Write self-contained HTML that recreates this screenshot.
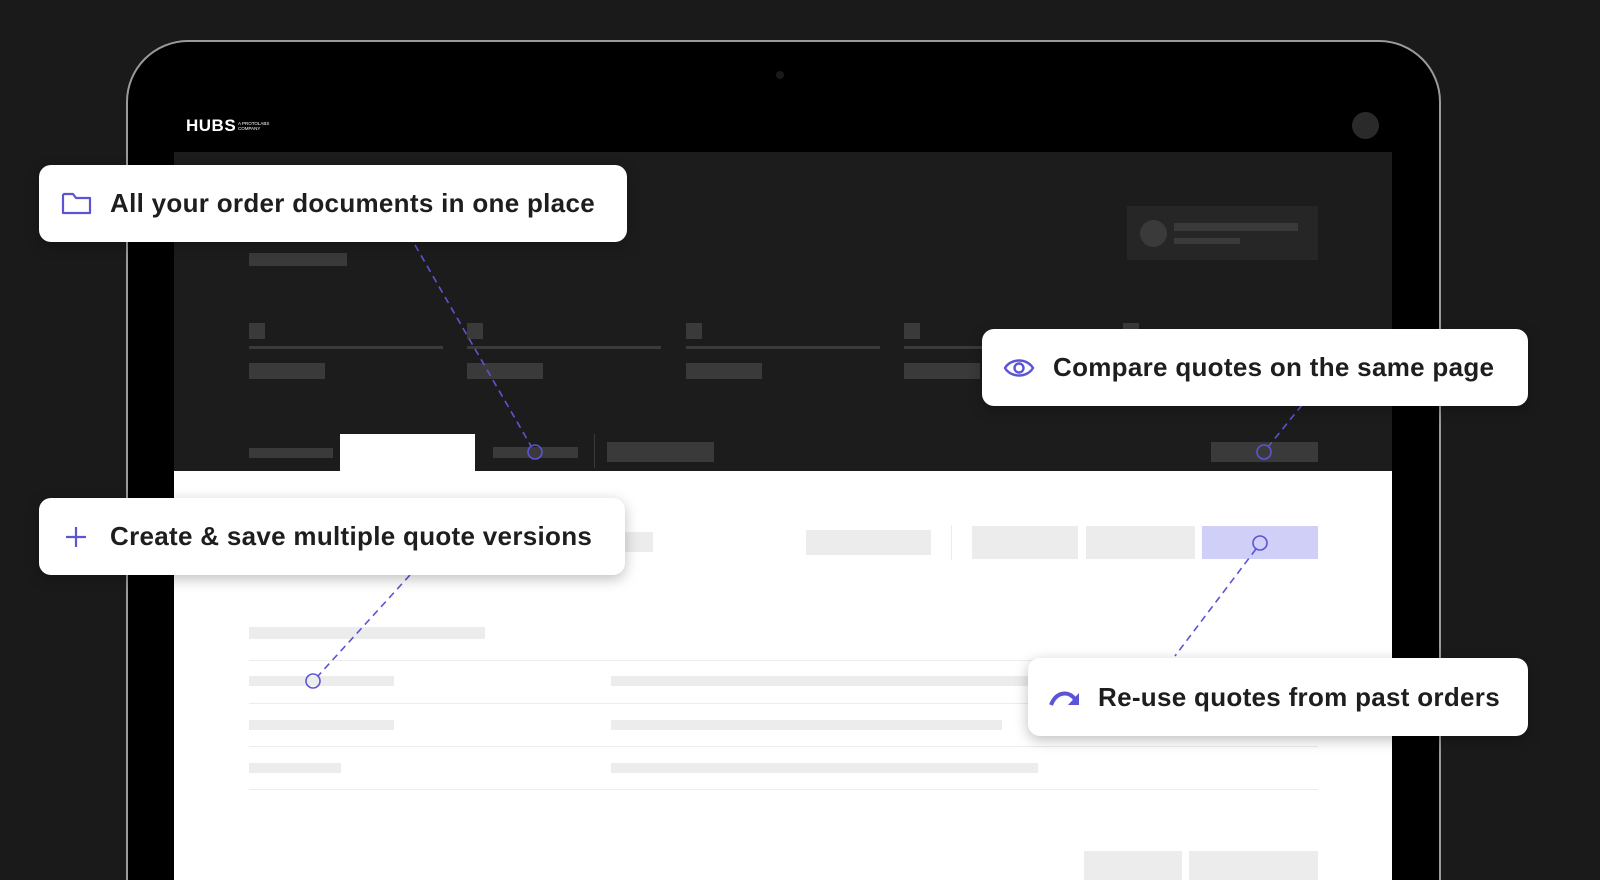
<!DOCTYPE html>
<html style="overflow:hidden;width:1600px;height:880px"><head><meta charset="utf-8"><style>
*{margin:0;padding:0;box-sizing:border-box}
body{width:1600px;height:880px;background:#1a1a1a;position:relative;overflow:hidden;font-family:"Liberation Sans",sans-serif}
.a{position:absolute}
.d{background:#3a3a3a}
.l{background:#ececec}
.card{position:absolute;background:#fff;border-radius:12px;box-shadow:0 4px 14px rgba(0,0,0,.25);display:flex;align-items:center;font-weight:bold;font-size:26px;color:#1e1e1e;letter-spacing:0.3px;white-space:nowrap}
.card svg{position:absolute}
</style></head><body>
<div class="a" style="left:126px;top:40px;width:1315px;height:860px;border:2px solid #9a9a9a;border-bottom:none;border-radius:62px 62px 0 0;background:#000"></div>
<div class="a" style="left:776px;top:71px;width:8px;height:8px;border-radius:50%;background:#1a1a1a"></div>
<div class="a" style="left:186px;top:116px;color:#fff;font-weight:bold;font-size:17px;letter-spacing:0.5px">HUBS</div>
<div class="a" style="left:238px;top:121px;color:#fff;font-size:4.5px;line-height:5px">A PROTOLABS<br>COMPANY</div>
<div class="a" style="left:1352px;top:112px;width:27px;height:27px;border-radius:50%;background:#2a2a2a"></div>
<div class="a" style="left:174px;top:152px;width:1218px;height:319px;background:#1c1c1c"></div>
<div class="a" style="left:174px;top:471px;width:1218px;height:409px;background:#fff"></div>
<div class="a" style="left:1127px;top:206px;width:191px;height:54px;background:#262626"></div>
<div class="a" style="left:1140px;top:220px;width:27px;height:27px;border-radius:50%;background:#3a3a3a"></div>
<div class="a d" style="left:1174px;top:223px;width:124px;height:8px"></div>
<div class="a d" style="left:1174px;top:238px;width:66px;height:6px"></div>
<div class="a d" style="left:249px;top:253px;width:98px;height:13px"></div>
<div class="a d" style="left:249px;top:323px;width:16px;height:16px"></div>
<div class="a d" style="left:467px;top:323px;width:16px;height:16px"></div>
<div class="a d" style="left:686px;top:323px;width:16px;height:16px"></div>
<div class="a d" style="left:904px;top:323px;width:16px;height:16px"></div>
<div class="a d" style="left:1123px;top:323px;width:16px;height:16px"></div>
<div class="a d" style="left:249px;top:346px;width:194px;height:3px"></div>
<div class="a d" style="left:467px;top:346px;width:194px;height:3px"></div>
<div class="a d" style="left:686px;top:346px;width:194px;height:3px"></div>
<div class="a d" style="left:904px;top:346px;width:194px;height:3px"></div>
<div class="a d" style="left:249px;top:363px;width:76px;height:16px"></div>
<div class="a d" style="left:467px;top:363px;width:76px;height:16px"></div>
<div class="a d" style="left:686px;top:363px;width:76px;height:16px"></div>
<div class="a d" style="left:904px;top:363px;width:76px;height:16px"></div>
<div class="a d" style="left:249px;top:448px;width:84px;height:10px"></div>
<div class="a" style="left:340px;top:434px;width:135px;height:40px;background:#fff"></div>
<div class="a d" style="left:493px;top:447px;width:85px;height:11px"></div>
<div class="a d" style="left:594px;top:434px;width:1px;height:34px"></div>
<div class="a d" style="left:607px;top:442px;width:107px;height:20px"></div>
<div class="a d" style="left:1211px;top:442px;width:107px;height:20px"></div>
<div class="a l" style="left:600px;top:532px;width:53px;height:20px"></div>
<div class="a l" style="left:806px;top:530px;width:125px;height:25px"></div>
<div class="a l" style="left:951px;top:525px;width:1px;height:35px"></div>
<div class="a l" style="left:972px;top:526px;width:106px;height:33px"></div>
<div class="a l" style="left:1086px;top:526px;width:109px;height:33px"></div>
<div class="a" style="left:1202px;top:526px;width:116px;height:33px;background:#cfcff7"></div>
<div class="a l" style="left:249px;top:627px;width:236px;height:12px"></div>
<div class="a l" style="left:249px;top:660px;width:1069px;height:1px"></div>
<div class="a l" style="left:249px;top:676px;width:145px;height:10px"></div>
<div class="a l" style="left:611px;top:676px;width:430px;height:10px"></div>
<div class="a l" style="left:249px;top:703px;width:1069px;height:1px"></div>
<div class="a l" style="left:249px;top:720px;width:145px;height:10px"></div>
<div class="a l" style="left:611px;top:720px;width:391px;height:10px"></div>
<div class="a l" style="left:249px;top:746px;width:1069px;height:1px"></div>
<div class="a l" style="left:249px;top:763px;width:92px;height:10px"></div>
<div class="a l" style="left:611px;top:763px;width:427px;height:10px"></div>
<div class="a l" style="left:249px;top:789px;width:1069px;height:1px"></div>
<div class="a l" style="left:1084px;top:851px;width:98px;height:30px"></div>
<div class="a l" style="left:1189px;top:851px;width:129px;height:30px"></div>
<svg class="a" style="left:0;top:0" width="1600" height="880"><g stroke="#5b55d6" stroke-width="1.6" fill="none"><g stroke-dasharray="7 5"><line x1="415" y1="245" x2="531" y2="446"/><line x1="1302" y1="405" x2="1268" y2="447"/><line x1="410" y1="575" x2="318" y2="676"/><line x1="1256" y1="549" x2="1175" y2="656"/></g><circle cx="535" cy="452" r="7"/><circle cx="1264" cy="452" r="7"/><circle cx="313" cy="681" r="7"/><circle cx="1260" cy="543" r="7"/></g></svg>
<div class="card" style="left:39px;top:165px;width:588px;height:77px"><svg style="left:22px;top:26px" width="32" height="26" viewBox="0 0 32 26"><path d="M2 4 V22 H29 V7 H15 L12 3 H3 Z" fill="none" stroke="#5b55d6" stroke-width="2.2" stroke-linejoin="round"/></svg><span style="margin-left:71px">All your order documents in one place</span></div>
<div class="card" style="left:982px;top:329px;width:546px;height:77px"><svg style="left:21px;top:28px" width="32" height="22" viewBox="0 0 32 22"><path d="M2 11 C8 1 24 1 30 11 C24 21 8 21 2 11 Z" fill="none" stroke="#5b55d6" stroke-width="2.4"/><circle cx="16" cy="11" r="4.5" fill="none" stroke="#5b55d6" stroke-width="2.4"/></svg><span style="margin-left:71px">Compare quotes on the same page</span></div>
<div class="card" style="left:39px;top:498px;width:586px;height:77px"><svg style="left:26px;top:28px" width="22" height="22" viewBox="0 0 22 22"><path d="M11 1 V21 M1 11 H21" stroke="#5b55d6" stroke-width="2.2"/></svg><span style="margin-left:71px">Create &amp; save multiple quote versions</span></div>
<div class="card" style="left:1028px;top:658px;width:500px;height:78px"><svg style="left:20px;top:30px" width="34" height="20" viewBox="0 0 34 20"><path d="M3 17 C8 4 20 2 27 11" fill="none" stroke="#5b55d6" stroke-width="4"/><path d="M31 5 V17 H20 Z" fill="#5b55d6"/></svg><span style="margin-left:70px">Re-use quotes from past orders</span></div>
</body></html>
